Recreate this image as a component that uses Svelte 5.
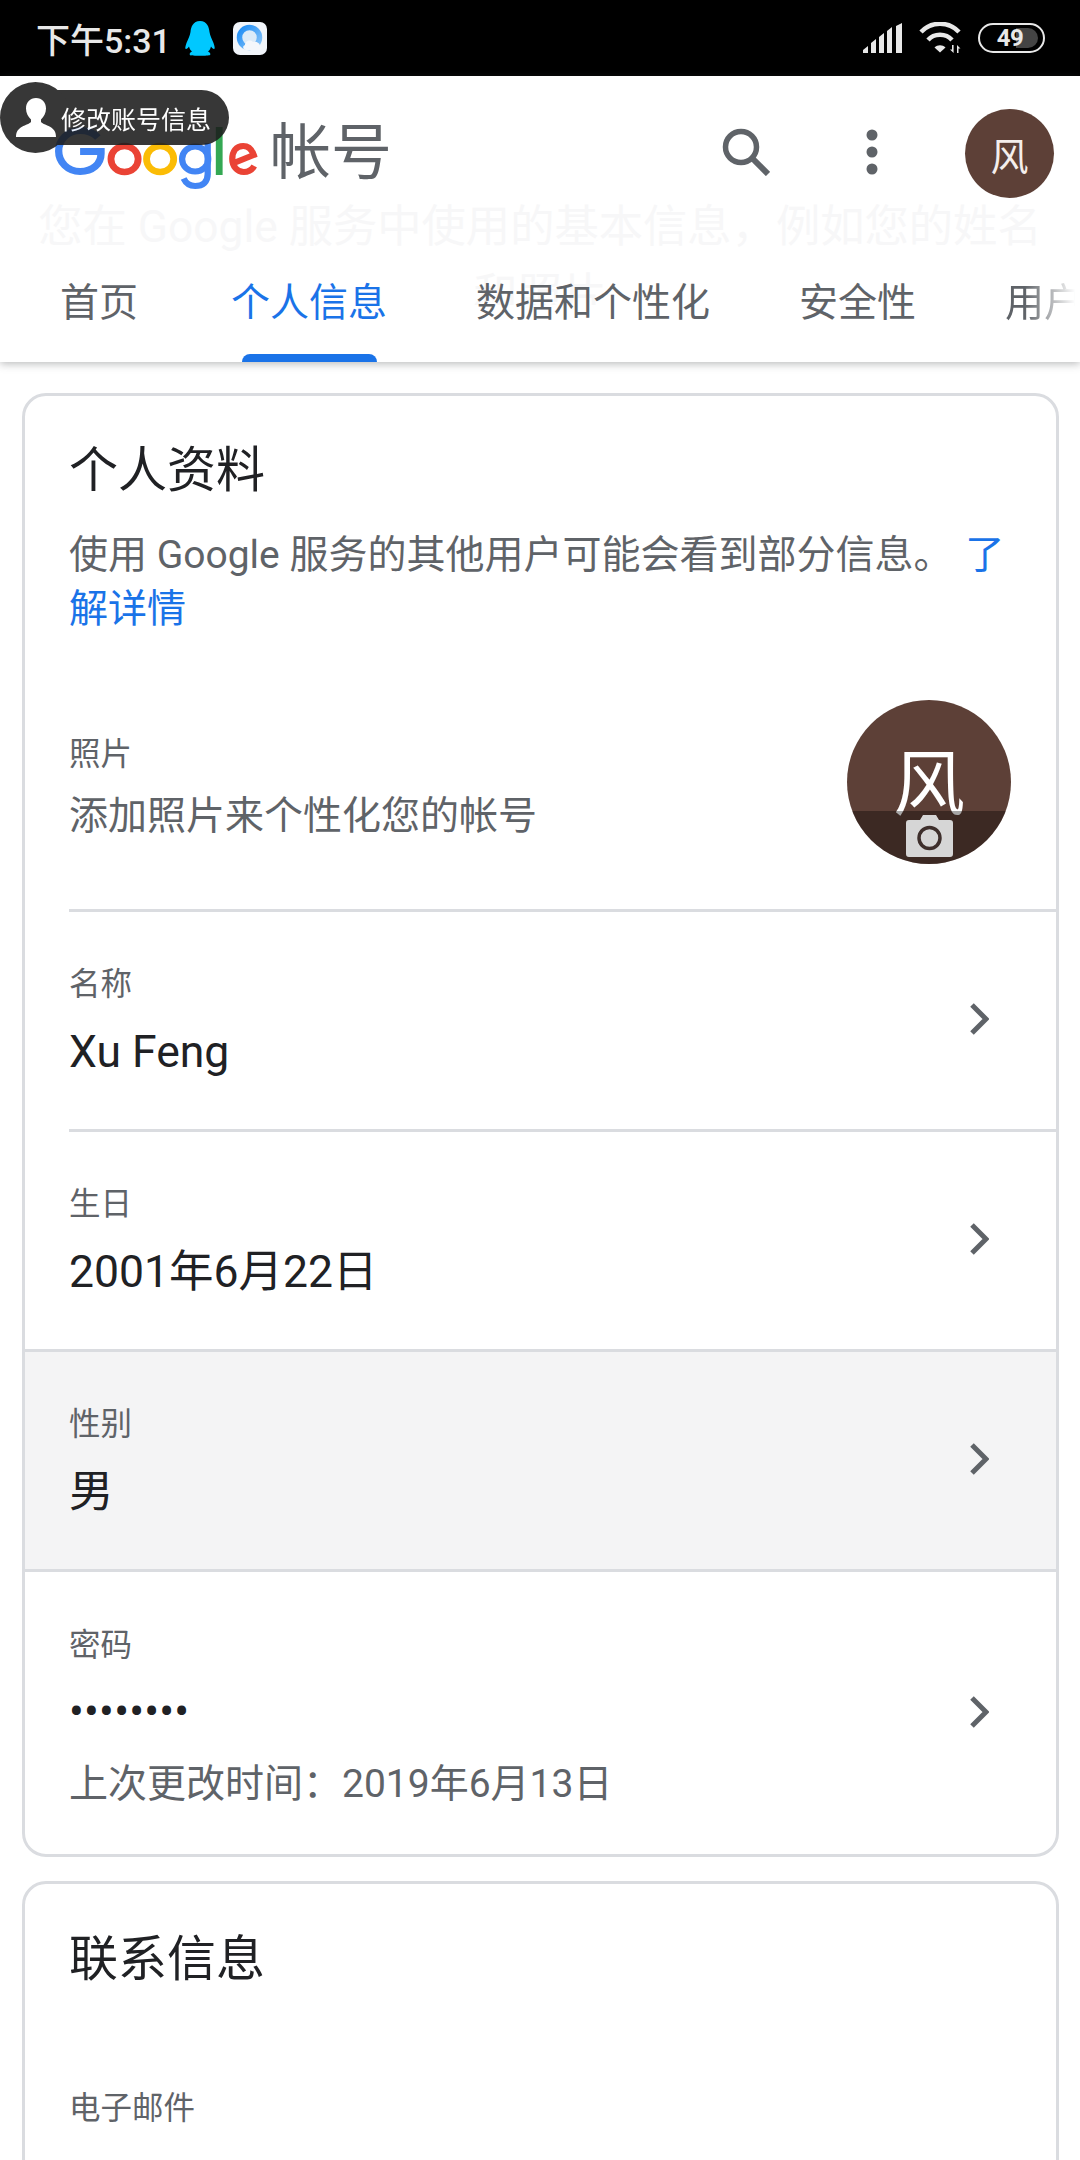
<script>
  const tabs = ['首页', '个人信息', '数据和个性化', '安全性', '用户'];
</script>

<div class="page">
  <div class="status">
    <span class="time">下午5:31</span>
    <svg class="qq" viewBox="0 0 30 35" width="30" height="35"><path d="M15 0C8 0 6 6 5.500 11 5 15 3 18 1.500 22 0 26 0 28 1 28c1 0 2-1 3-2.500.5 2 1.500 4 3 5C5 31.500 4 33 5 34c1 1 19 1 20 0 1-1 0-2.500-2-3.500 1.500-1 2.500-3 3-5 1 1.500 2 2.500 3 2.500 1 0 1-2-.5-6C27 18 25 15 24.500 11 24 6 22 0 15 0z" fill="#00c8ff"/></svg>
    <svg class="browser" viewBox="0 0 34 33" width="34" height="33">
      <defs>
        <linearGradient id="ring" x1="0" y1="0" x2="1" y2="1">
          <stop offset="0" stop-color="#1c8cf5"/>
          <stop offset="1" stop-color="#8cc6f8"/>
        </linearGradient>
      </defs>
      <rect width="34" height="33" rx="7" fill="#f1f5fa"/>
      <circle cx="16.500" cy="15.500" r="10" fill="#dcebf8" stroke="url(#ring)" stroke-width="5.500"/>
      <path d="M13 28c-3 0-4-4-1-5 0-4 5-6 8-3 3-1 7 1 7 4 2 0 3 4 0 4z" fill="#f4f7fb"/>
    </svg>
    <span class="spacer"></span>
    <svg class="signal" viewBox="0 0 41 30" width="41" height="30">
      <path d="M1 30v-3l5-4v7zM9 30V20l5-4v14zM17 30V14l5-4v20zM25 30V8l5-4v26zM34 30V3l6-3v30z" fill="#e8e8e8"/>
    </svg>
    <svg class="wifi" viewBox="0 0 44 32" width="44" height="32">
      <g fill="none" stroke="#e8e8e8" stroke-width="4.400">
        <path d="M2 10C12-1 30-1 40 10"/>
        <path d="M9 18c6-7 18-7 24 0"/>
      </g>
      <path d="M15.500 25.500c3-3 8-3 11 0L21 30.500z" fill="#e8e8e8"/>
      <path d="M33 23h1.600v8L31 27.500h2zM38 23l3.500 3.500h-2v4.500H38z" fill="#e8e8e8"/>
    </svg>
    <span class="battery"><span class="level"></span><span class="pct">49</span></span>
  </div>

  <header class="header">
    <div class="ghost">
      <div>您在 Google 服务中使用的基本信息，例如您的姓名</div>
      <div>和照片</div>
    </div>
    <div class="bar">
      <svg class="logo" viewBox="0 0 196 64" width="205" height="64" preserveAspectRatio="none" aria-label="Google">
        <g fill="none">
          <path d="M41 10.500C37 6 31 3.500 24 3.500 12 3.500 3.500 13 3.500 24S12 44.500 24 44.500c12 0 20-7.500 20-18v-2H24" stroke="#4285f4" stroke-width="7"/>
          <circle cx="66.500" cy="32" r="13" stroke="#ea4335" stroke-width="6.500"/>
          <circle cx="100.500" cy="32" r="13" stroke="#fbbc05" stroke-width="6.500"/>
          <circle cx="134" cy="32" r="12.500" stroke="#4285f4" stroke-width="6"/>
          <path d="M146 16v31c0 8-4.500 12-12 12-5 0-9-3-11-7.500" stroke="#4285f4" stroke-width="6"/>
          <path d="M157 0v48" stroke="#34a853" stroke-width="6.500"/>
          <path d="M171 36l19-8c-2-6-5-9-10-9-7 0-10.500 6-10.500 13s4.500 13 11 13c5 0 8-2.500 10-6" stroke="#ea4335" stroke-width="6"/>
        </g>
      </svg>
      <span class="product">帐号</span>
      <span class="spacer"></span>
      <svg class="search" viewBox="0 0 48 48" width="48" height="48">
        <circle cx="19" cy="19" r="15.500" fill="none" stroke="#5f6368" stroke-width="5.500"/>
        <path d="M30 30l16 16" stroke="#5f6368" stroke-width="6"/>
      </svg>
      <svg class="dots" viewBox="0 0 12 46" width="12" height="46">
        <circle cx="6" cy="6" r="5.500" fill="#5f6368"/>
        <circle cx="6" cy="23" r="5.500" fill="#5f6368"/>
        <circle cx="6" cy="40" r="5.500" fill="#5f6368"/>
      </svg>
      <span class="avatar-sm">风</span>
    </div>
    <nav class="tabs">
      {#each tabs as tab, i}
        <span class="tab" class:active={i === 1} class:fade={i === 4}>{tab}</span>
      {/each}
    </nav>
  </header>

  <div class="tip">
    <span class="tip-round">
      <svg viewBox="0 0 40 39" width="40" height="39">
        <path d="M20 0c6 0 10 4.500 10 10.500 0 4.500-2.200 8.500-5 11v2.500c1 1.500 5.500 2.800 9 4.800 3.500 2 6 4.700 6 10.200H0c0-5.500 2.500-8.200 6-10.200 3.500-2 8-3.300 9-4.800v-2.500c-2.800-2.500-5-6.500-5-11C10 4.500 14 0 20 0z" fill="#fff"/>
      </svg>
    </span>
    <span class="tip-text">修改账号信息</span>
  </div>

  <section class="card first">
    <h2>个人资料</h2>
    <p class="intro">使用 Google 服务的其他用户可能会看到部分信息。 <a href="#top">了解详情</a></p>

    <div class="row photo inset">
      <div class="photo-text">
        <div class="label">照片</div>
        <div class="sub">添加照片来个性化您的帐号</div>
      </div>
      <div class="avatar">
        <span class="avatar-letter">风</span>
        <span class="strip">
          <svg viewBox="0 0 47 42" width="47" height="42">
            <path d="M3 5h11l3-5h13l3 5h11a3 3 0 0 1 3 3v31a3 3 0 0 1-3 3H3a3 3 0 0 1-3-3V8a3 3 0 0 1 3-3z" fill="#d6d6d6"/>
            <circle cx="23.500" cy="23" r="10.500" fill="none" stroke="#3e2f2c" stroke-width="3.500"/>
          </svg>
        </span>
      </div>
    </div>

    <div class="row inset">
      <div>
        <div class="label">名称</div>
        <div class="value">Xu Feng</div>
      </div>
      <svg class="chev" viewBox="0 0 20 32" width="20" height="32"><path d="M3 2l14 14L3 30" fill="none" stroke="#5f6368" stroke-width="5"/></svg>
    </div>

    <div class="row inset">
      <div>
        <div class="label">生日</div>
        <div class="value">2001年6月22日</div>
      </div>
      <svg class="chev" viewBox="0 0 20 32" width="20" height="32"><path d="M3 2l14 14L3 30" fill="none" stroke="#5f6368" stroke-width="5"/></svg>
    </div>

    <div class="row hover">
      <div>
        <div class="label">性别</div>
        <div class="value">男</div>
      </div>
      <svg class="chev" viewBox="0 0 20 32" width="20" height="32"><path d="M3 2l14 14L3 30" fill="none" stroke="#5f6368" stroke-width="5"/></svg>
    </div>

    <div class="row pw">
      <div>
        <div class="label">密码</div>
        <div class="value dots-text">••••••••</div>
        <div class="sub">上次更改时间：2019年6月13日</div>
      </div>
      <svg class="chev" viewBox="0 0 20 32" width="20" height="32"><path d="M3 2l14 14L3 30" fill="none" stroke="#5f6368" stroke-width="5"/></svg>
    </div>
  </section>

  <section class="card second">
    <h2>联系信息</h2>
    <div class="label mail">电子邮件</div>
  </section>
</div>

<style>
  :global(body) { margin: 0; background: #fff; }
  .page {
    position: relative;
    width: 1080px;
    height: 2160px;
    overflow: hidden;
    background: #fff;
    font-family: Roboto, "Noto Sans CJK SC", sans-serif;
    color: #202124;
  }
  .spacer { flex: 1; }
  .status {
    height: 76px;
    background: #000;
    display: flex;
    align-items: center;
    padding: 0 35px 0 36px;
    box-sizing: border-box;
    color: #e8e8e8;
  }
  .time { font-size: 34px; font-weight: 500; width: 149px; white-space: nowrap; }
  .qq { margin-right: 18px; }
  .signal { margin-right: 16px; }
  .wifi { margin-right: 15px; }
  .battery {
    position: relative;
    width: 67px;
    height: 30px;
    box-sizing: border-box;
    border: 2.500px solid #e8e8e8;
    border-radius: 15px;
    display: flex;
    align-items: center;
    justify-content: center;
  }
  .level {
    position: absolute;
    left: 3px;
    top: 3px;
    bottom: 3px;
    width: 55px;
    border-radius: 10px;
    background: linear-gradient(to right, #000 0 60%, #444 60% 100%);
  }
  .pct {
    position: relative;
    font-size: 24px;
    font-weight: 700;
    letter-spacing: -.5px;
    color: #e8e8e8;
    margin-right: 3px;
  }
  .header {
    position: relative;
    height: 286px;
    background: #fff;
    box-shadow: 0 2px 8px rgba(60, 64, 67, .35);
    z-index: 1;
  }
  .ghost {
    position: absolute;
    top: 117px;
    left: 0;
    right: 0;
    height: 112px;
    overflow: hidden;
    text-align: center;
    font-size: 44.300px;
    line-height: 68px;
    white-space: nowrap;
    color: #f7f7f8;
  }
  .bar {
    position: relative;
    height: 154px;
    display: flex;
    align-items: flex-start;
    padding: 33px 26px 0 55px;
    box-sizing: border-box;
  }
  .logo { margin-top: 18px; }
  .product {
    font-size: 61px;
    line-height: 80px;
    color: #5f6368;
    margin: 4px 0 0 10px;
  }
  .search { margin: 19px 96px 0 0; }
  .dots { margin: 20px 87px 0 0; }
  .avatar-sm {
    width: 89px;
    height: 89px;
    border-radius: 50%;
    background: #5d4037;
    color: #f4eeec;
    font-size: 38px;
    display: flex;
    align-items: center;
    justify-content: center;
  }
  .tabs {
    position: relative;
    height: 132px;
    display: flex;
    align-items: flex-start;
    padding-left: 60px;
    font-size: 39px;
    color: #5f6368;
    white-space: nowrap;
    overflow: hidden;
  }
  .tab { position: relative; line-height: 56px; margin: 45px 89px 0 0; flex: none; }
  .active { color: #1a73e8; margin-left: 4px; }
  .active::after {
    content: "";
    position: absolute;
    left: 11px;
    right: 10px;
    top: 79px;
    height: 8px;
    background: #1a73e8;
    border-radius: 8px 8px 0 0;
  }
  .fade {
    -webkit-mask-image: linear-gradient(to right, #000 25%, transparent 90%);
    mask-image: linear-gradient(to right, #000 25%, transparent 90%);
  }
  .tip {
    position: absolute;
    left: 0;
    top: 82px;
    z-index: 5;
    display: flex;
    align-items: center;
    height: 71px;
    opacity: .88;
  }
  .tip::before {
    content: "";
    position: absolute;
    left: 35px;
    right: 0;
    top: 8px;
    bottom: 8px;
    background: #1c1c1c;
    border-radius: 0 28px 28px 0;
  }
  .tip-round {
    position: relative;
    z-index: 1;
    width: 71px;
    height: 71px;
    border-radius: 50%;
    background: #1c1c1c;
    display: flex;
    align-items: center;
    justify-content: center;
  }
  .tip-text {
    position: relative;
    z-index: 2;
    margin-left: -10px;
    padding-right: 18px;
    font-size: 25px;
    color: #fff;
    white-space: nowrap;
  }
  .card {
    margin: 0 21px 0 22px;
    border: 3px solid #dadce0;
    border-radius: 24px;
    background: #fff;
    overflow: hidden;
    box-sizing: border-box;
  }
  .first { margin-top: 31px; height: 1464px; }
  .second { margin-top: 24px; height: 400px; }
  h2 {
    margin: 0;
    font-size: 49px;
    font-weight: 400;
    line-height: 64px;
    padding: 43px 44px 0;
    color: #202124;
  }
  .second h2 { padding-top: 44px; }
  .intro {
    margin: 25px 0 0;
    padding: 0 44px;
    font-size: 39px;
    line-height: 54px;
    color: #5f6368;
    height: 108px;
  }
  .intro a { color: #1a73e8; text-decoration: none; margin-left: 3px; }
  .label { font-size: 31.500px; line-height: 44px; color: #5f6368; padding-top: 1.500px; }
  .value { font-size: 44.500px; line-height: 56px; color: #202124; margin-top: 16.500px; }
  .sub { font-size: 39px; line-height: 54px; color: #5f6368; margin-top: 12.500px; }
  .row {
    display: flex;
    align-items: center;
    justify-content: space-between;
    height: 220px;
    padding: 0 48px 0 44px;
    box-sizing: border-box;
    position: relative;
    border-top: 3px solid #dadce0;
  }
  .row.inset { border-top-color: transparent; }
  .row.inset::before {
    content: "";
    position: absolute;
    top: -3px;
    left: 44px;
    right: 0;
    height: 3px;
    background: #dadce0;
  }
  .photo { height: 273px; padding-right: 44px; }
  .row.photo::before { display: none; }
  .photo-text { padding-top: 26px; }
  .hover { background: #f4f4f5; }
  .pw { height: 255px; align-items: flex-start; padding-top: 50px; }
  .dots-text { font-size: 44px; letter-spacing: .2px; margin-top: 16.500px; }
  .pw .sub { margin-top: 17px; }
  .chev { margin: -3px 19px 0 0; }
  .pw .chev { margin-top: 74px; }
  .avatar {
    position: relative;
    width: 164px;
    height: 164px;
    border-radius: 50%;
    background: #5d4037;
    overflow: hidden;
    margin-right: 1px;
    margin-top: 16px;
  }
  .avatar-letter {
    display: block;
    text-align: center;
    font-size: 72px;
    line-height: 164px;
    color: #fff;
    margin-top: 3px;
  }
  .strip {
    position: absolute;
    left: 0;
    right: 0;
    bottom: 0;
    height: 53px;
    background: rgba(0, 0, 0, .35);
    display: flex;
    justify-content: center;
    padding-top: 4px;
    box-sizing: border-box;
  }
  .mail { padding: 0 44px; margin-top: 95px; }
</style>
